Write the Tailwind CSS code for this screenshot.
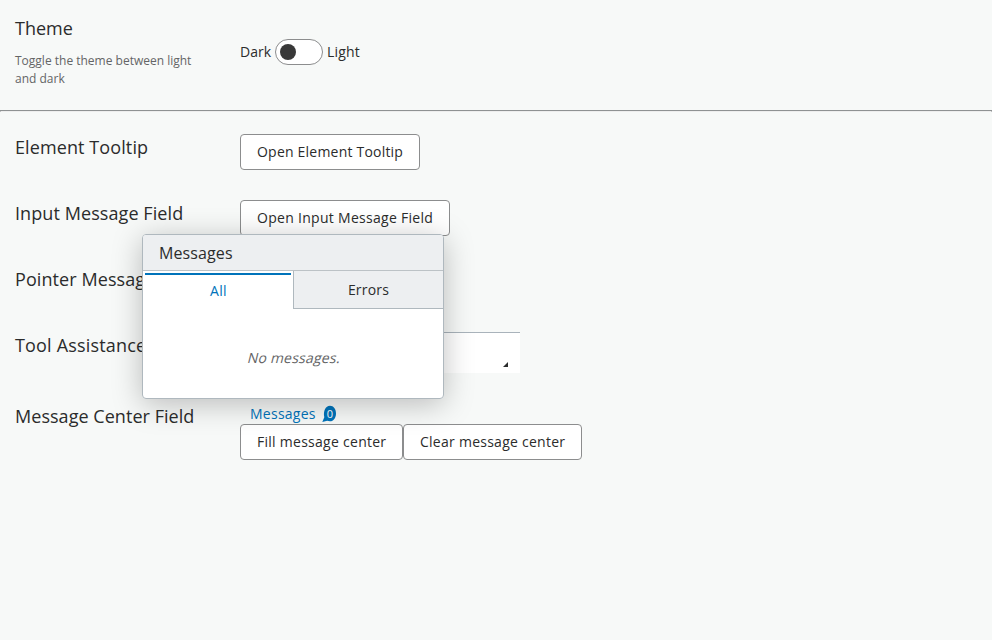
<!DOCTYPE html>
<html lang="en">
<head>
<meta charset="utf-8">
<title>Component settings</title>
<script src="https://cdn.jsdelivr.net/npm/@tailwindcss/browser@4"></script>
</head>
<body class="relative h-[640px] overflow-hidden bg-[#f7f9f8] font-['Open_Sans',sans-serif] text-sm text-[#2b2c2c]">
<main>
  <section class="flex h-[110px] pl-[15px]">
    <div class="w-[225px] pt-[15px]">
      <h2 class="text-lg leading-[27px]">Theme</h2>
      <p class="mt-[10px] w-[190px] text-xs leading-[18px] text-[#646566]">Toggle the theme between light and dark</p>
    </div>
    <div class="flex h-[26px] items-center gap-1 mt-[39px]">
      <span>Dark</span>
      <span class="flex h-[26px] w-12 items-center rounded-full border border-[#8c8d8e] bg-white pl-1"><span class="size-4 rounded-full bg-[#383838]"></span></span>
      <span class="tracking-[0.2px]">Light</span>
    </div>
  </section>
  <hr class="h-[2px] border border-[#8f9293] border-b-[#eeeeee]">
  <section class="flex h-[66px] mt-[22px] pl-[15px]">
    <h2 class="w-[225px] text-lg leading-[27px] tracking-[0.1px]">Element Tooltip</h2>
    <button class="h-9 w-[180px] rounded border border-[#8c8d8e] bg-white pl-4 text-left tracking-[0.21px]">Open Element Tooltip</button>
  </section>
  <section class="flex h-[66px] pl-[15px]">
    <h2 class="w-[225px] text-lg leading-[27px] tracking-[0.08px]">Input Message Field</h2>
    <button class="h-9 w-[210px] rounded border border-[#8c8d8e] bg-white pl-4 text-left tracking-[0.29px]">Open Input Message Field</button>
  </section>
  <section class="flex h-[66px] pl-[15px]">
    <h2 class="w-[225px] text-lg leading-[27px] tracking-[0.08px]">Pointer Message</h2>
  </section>
  <section class="flex h-[71px] pl-[15px]">
    <h2 class="w-[225px] text-lg leading-[27px] tracking-[0.18px]">Tool Assistance Field</h2>
    <div class="flex h-[41px] w-[280px] items-end justify-end border-t border-[#a9b3bb] bg-white pr-3 pb-1.5">
      <svg class="size-[5px]" viewBox="0 0 5 5"><path d="M5 0v5H0z" fill="#2b2c2c"/></svg>
    </div>
  </section>
  <section class="flex pl-[15px]">
    <h2 class="w-[225px] text-lg leading-[27px] tracking-[0.04px]">Message Center Field</h2>
    <div>
      <div class="flex h-[21px] items-center gap-[6px] pl-[10px] text-[#0073ba]">
        <span class="tracking-[0.25px]">Messages</span>
        <svg class="h-[17px] w-[15px]" viewBox="0 0 15 17"><path d="M8 .8C11.500 .8 14 4 14 8.500S11.500 16.300 8 16.300C6.800 16.300 6 16 5.200 15.800L.3 17 2.300 12.200C1 6.500 3.500 .8 8 .8Z" fill="#0073ba"/><text x="8" y="12.500" text-anchor="middle" font-size="11" fill="white">0</text></svg>
      </div>
      <div class="flex">
        <button class="h-9 w-[163px] rounded border border-[#8c8d8e] bg-white pl-4 text-left tracking-[0.27px]">Fill message center</button>
        <button class="h-9 w-[179px] rounded border border-[#8c8d8e] bg-white pl-4 text-left tracking-[0.26px]">Clear message center</button>
      </div>
    </div>
  </section>
</main>
<div class="absolute top-[234px] left-[142px] h-[165px] w-[302px] overflow-hidden rounded border border-[#afb8be] bg-white">
  <div class="h-9 border-b border-[#bcc2c6] bg-[#edeff1] pl-4 text-base leading-[37px] tracking-[0.1px]">Messages</div>
  <div class="flex h-[38px]">
    <div class="w-[150px] pt-[2px] pr-[2px] pl-[2px]"><div class="border-t-2 border-[#0073ba] pl-[1px] text-center leading-[32px] tracking-[0.3px] text-[#0073ba]">All</div></div>
    <div class="w-[150px] border-b border-l border-[#afb8be] bg-[#edeff1] text-center leading-[37px] tracking-[0.2px]">Errors</div>
  </div>
  <p class="pt-[39px] pl-[2px] text-center tracking-[0.2px] text-[#646566]"><span class="inline-block -skew-x-[14deg]">No messages.</span></p>
</div>
<div class="pointer-events-none absolute top-[234px] left-[142px] h-[165px] w-[302px] rounded shadow-[0_5px_30px_rgba(0,0,0,0.25)]"></div>
</body>
</html>
